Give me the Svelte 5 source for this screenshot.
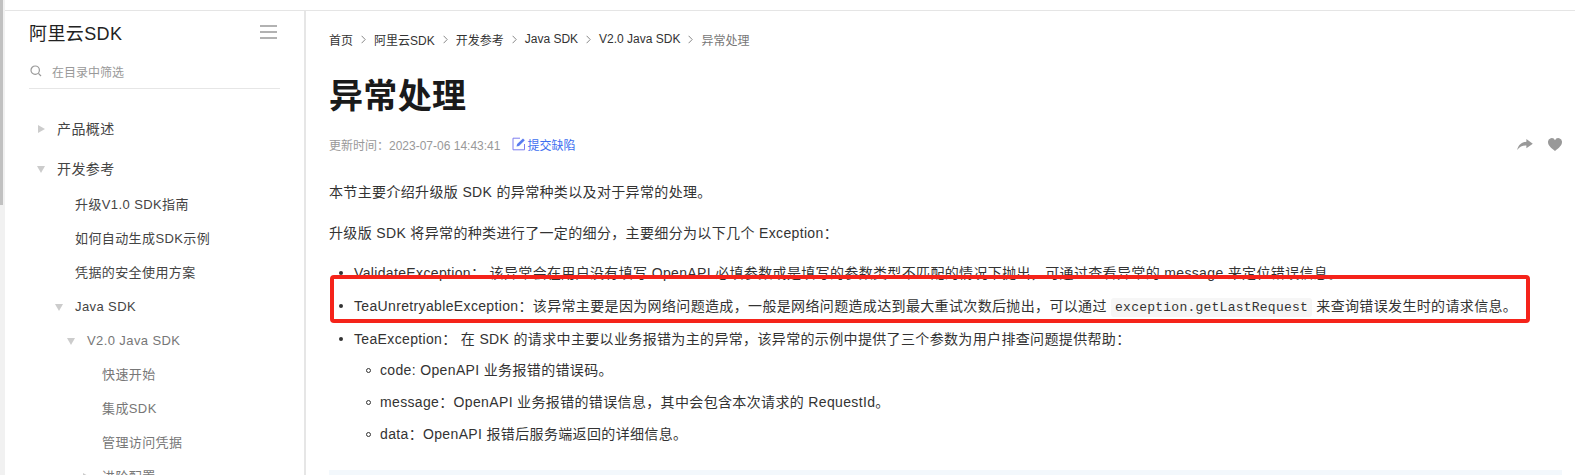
<script>
  const nav = [
    { label: '产品概述', depth: 0, arrow: 'right' },
    { label: '开发参考', depth: 0, arrow: 'down' },
    { label: '升级V1.0 SDK指南', depth: 1 },
    { label: '如何自动生成SDK示例', depth: 1 },
    { label: '凭据的安全使用方案', depth: 1 },
    { label: 'Java SDK', depth: 1, arrow: 'down' },
    { label: 'V2.0 Java SDK', depth: 2, arrow: 'down', muted: true },
    { label: '快速开始', depth: 3, muted: true },
    { label: '集成SDK', depth: 3, muted: true },
    { label: '管理访问凭据', depth: 3, muted: true },
    { label: '进阶配置', depth: 3, arrow: 'right', muted: true }
  ];
  const crumbs = ['首页', '阿里云SDK', '开发参考', 'Java SDK', 'V2.0 Java SDK'];
</script>

<div class="page">
  <div class="topbar"></div>
  <div class="body">
    <div class="scrolltrack"><div class="thumb"></div></div>
    <aside class="side">
      <div class="side__head">
        <span class="side__title">阿里云SDK</span>
        <svg class="burger" width="17" height="14" viewBox="0 0 17 14">
          <path d="M0 1h17M0 7h17M0 13h17" stroke="#999" stroke-width="1.5" fill="none" />
        </svg>
      </div>
      <div class="search">
        <svg width="12" height="12" viewBox="0 0 12 12">
          <circle cx="5.2" cy="5.2" r="4.2" stroke="#999" stroke-width="1.2" fill="none" />
          <path d="M8.4 8.4L11 11" stroke="#999" stroke-width="1.2" />
        </svg>
        <span>在目录中筛选</span>
      </div>
      <ul class="tree">
        {#each nav as item}
          <li class="tree__row depth{item.depth}" class:muted={item.muted}>
            {#if item.arrow}<i class="arrow {item.arrow}"></i>{/if}
            <span>{item.label}</span>
          </li>
        {/each}
      </ul>
    </aside>
    <main class="content">
      <nav class="crumbs">
        {#each crumbs as c}
          <span>{c}</span>
          <svg width="5" height="9" viewBox="0 0 5 9"><path d="M.6 .8L4.2 4.5 .6 8.2" stroke="#888" fill="none" /></svg>
        {/each}
        <span class="crumbs__last">异常处理</span>
      </nav>
      <h1>异常处理</h1>
      <div class="meta">
        <span class="meta__time">更新时间：2023-07-06 14:43:41</span>
        <span class="meta__link">
          <svg width="14" height="14" viewBox="0 0 14 14">
            <path d="M12.5 7v5.8H1V1.2h7" stroke="#7d7df0" fill="none" />
            <path d="M4.5 9.5l.6-2.4L11 1.4l1.8 1.8L7 9z" fill="#5a7cf0" />
          </svg>提交缺陷</span>
        <span class="meta__actions">
          <svg width="16" height="11" viewBox="0 0 17 12">
            <path d="M10 0l7 5.2L10 10V7C6 6.8 2.5 8.2 0 12 1 6.5 5 3.3 10 3z" fill="#999" />
          </svg>
          <svg width="14" height="13" viewBox="0 0 14 13">
            <path d="M7 13C3 9.8 0 7.5 0 4a3.7 3.7 0 0 1 7-1.8A3.7 3.7 0 0 1 14 4c0 3.5-3 5.8-7 9z" fill="#999" />
          </svg>
        </span>
      </div>
      <p>本节主要介绍升级版 SDK 的异常种类以及对于异常的处理。</p>
      <p>升级版 SDK 将异常的种类进行了一定的细分，主要细分为以下几个 Exception：</p>
      <ul class="list">
        <li>ValidateException： 该异常会在用户没有填写 OpenAPI 必填参数或是填写的参数类型不匹配的情况下抛出，可通过查看异常的 message 来定位错误信息。</li>
        <li>TeaUnretryableException：该异常主要是因为网络问题造成，一般是网络问题造成达到最大重试次数后抛出，可以通过 <code>exception.getLastRequest</code> 来查询错误发生时的请求信息。</li>
        <li>TeaException： 在 SDK 的请求中主要以业务报错为主的异常，该异常的示例中提供了三个参数为用户排查问题提供帮助：
          <ul class="sublist">
            <li>code: OpenAPI 业务报错的错误码。</li>
            <li>message：OpenAPI 业务报错的错误信息，其中会包含本次请求的 RequestId。</li>
            <li>data：OpenAPI 报错后服务端返回的详细信息。</li>
          </ul>
        </li>
      </ul>
      <div class="codeblock"></div>
      <div class="redbox"></div>
    </main>
  </div>
</div>

<style>
  :global(body) {
    background: #fff;
    color: #333;
    font-family: "Liberation Sans", "Noto Sans CJK SC", sans-serif;
  }
  ul {
    list-style: none;
    margin: 0;
    padding: 0;
  }
  .page {
    height: 475px;
    overflow: hidden;
  }
  .topbar {
    height: 10px;
    border-bottom: 1px solid #e5e5e5;
  }
  .body {
    display: flex;
    height: 464px;
  }
  .scrolltrack {
    width: 5px;
    flex: none;
    margin-top: -11px;
    height: 475px;
    background: #f1f1f1;
  }
  .thumb {
    width: 3px;
    height: 205px;
    background: #c1c1c1;
  }
  .side {
    flex: none;
    width: 251px;
    border-right: 2px solid #e6e6e6;
    padding: 0 24px;
    letter-spacing: 0.4px;
  }
  .side__head {
    display: flex;
    justify-content: space-between;
    align-items: center;
    height: 42px;
    padding-right: 3px;
  }
  .side__title {
    font-size: 18px;
    color: #222;
  }
  .search {
    display: flex;
    align-items: center;
    gap: 10px;
    height: 32px;
    margin-top: 2px;
    padding: 0 0 1px 1px;
    border-bottom: 1px solid #e6e6e6;
    font-size: 12px;
    letter-spacing: 0;
    color: #999;
  }
  .tree {
    margin-top: 20px;
  }
  .tree__row {
    position: relative;
    height: 34px;
    line-height: 34px;
    font-size: 13px;
    color: #444;
    white-space: nowrap;
  }
  .depth0 {
    padding-left: 28px;
    height: 40px;
    line-height: 40px;
    font-size: 14px;
  }
  .depth0 + .depth1 { margin-top: -1px; }
  .depth1 { padding-left: 46px; }
  .depth2 { padding-left: 58px; }
  .depth3 { padding-left: 73px; }
  .muted { color: #777; }
  .arrow {
    display: inline-block;
    position: absolute;
    width: 0;
    height: 0;
    top: 50%;
  }
  .arrow.right {
    border-left: 7px solid #ccc;
    border-top: 4px solid transparent;
    border-bottom: 4px solid transparent;
    margin-top: -4px;
    margin-left: -19px;
  }
  .arrow.down {
    border-top: 7px solid #ccc;
    border-left: 4px solid transparent;
    border-right: 4px solid transparent;
    margin-top: -3px;
    margin-left: -20px;
  }
  .content {
    position: relative;
    flex: 1;
    padding: 0 13px 0 23px;
    min-width: 0;
    letter-spacing: 0.35px;
  }
  .crumbs {
    display: flex;
    align-items: center;
    gap: 8px;
    height: 20px;
    margin-top: 18px;
    font-size: 12px;
    letter-spacing: 0;
    color: #333;
  }
  .crumbs__last { color: #777; }
  h1 {
    margin: 25px 0 0;
    font-size: 34px;
    line-height: 44px;
    font-weight: 700;
    color: #1a1a1a;
  }
  .meta {
    display: flex;
    align-items: center;
    margin-top: 16px;
    height: 20px;
    font-size: 12px;
    letter-spacing: 0;
    color: #999;
  }
  .meta__link {
    display: flex;
    align-items: center;
    margin-left: 12px;
    gap: 1px;
    color: #3d6ff0;
  }
  .meta__actions {
    margin-left: auto;
    display: flex;
    align-items: center;
    gap: 15px;
  }
  p {
    margin: 0;
    font-size: 14px;
    line-height: 22px;
    color: #333;
  }
  .meta + p {
    margin-top: 27px;
  }
  p + p {
    margin-top: 19px;
  }
  .list {
    margin-top: 18px;
    font-size: 14px;
    line-height: 22px;
    white-space: nowrap;
  }
  .list > li {
    position: relative;
    padding-left: 25px;
    margin-bottom: 11px;
  }
  .list > li::before {
    content: "";
    position: absolute;
    left: 10px;
    top: 9px;
    width: 4px;
    height: 4px;
    border-radius: 50%;
    background: #333;
  }
  .sublist {
    margin-top: 9px;
  }
  .sublist > li {
    position: relative;
    padding-left: 26px;
    margin-bottom: 10px;
  }
  .sublist > li::before {
    content: "";
    position: absolute;
    left: 12px;
    top: 9px;
    width: 5px;
    height: 5px;
    border-radius: 50%;
    border: 1px solid #333;
    box-sizing: border-box;
  }
  code {
    font-family: "Liberation Mono", monospace;
    font-size: 13px;
    line-height: 1;
    letter-spacing: 0.24px;
    background: #f6f6f6;
    border-radius: 3px;
    padding: 2px 4px;
  }
  .codeblock {
    height: 40px;
    margin-top: 25px;
    background: #f3f8fc;
  }
  .redbox {
    position: absolute;
    left: 24px;
    top: 264px;
    width: 1192px;
    height: 40px;
    border: 4px solid #f5231a;
    border-radius: 4px;
  }
</style>
